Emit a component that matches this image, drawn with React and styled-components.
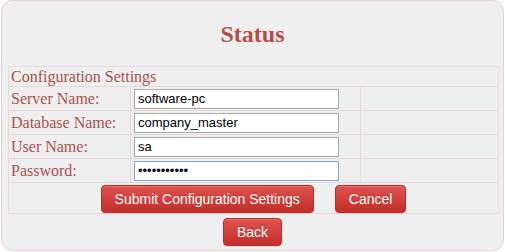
import React from "react"
import styled, { createGlobalStyle } from "styled-components"

const GlobalStyle = createGlobalStyle`
    body {
        margin: 0;
        background: #ffffff;
        font-family: "Liberation Serif", "Times New Roman", serif;
    }
`

const Panel = styled.div`
    box-sizing: border-box;
    width: 503px;
    height: 251px;
    margin: 0 0 0 1px;
    padding: 0 6px;
    background-color: #efefef;
    border: 1px solid #e6d2d4;
    border-radius: 11px;
`

const Title = styled.h2`
    margin: 0;
    height: 65px;
    display: flex;
    align-items: center;
    justify-content: center;
    padding-top: 2px;
    box-sizing: border-box;
    font-family: "Liberation Serif", "Times New Roman", serif;
    font-size: 24px;
    font-weight: bold;
    color: #b34f4a;
`

const Table = styled.table`
    width: 490px;
    border-collapse: collapse;
    table-layout: fixed;
`

const Cell = styled.td`
    border: 1px solid #ead7d9;
    padding: 0 2px;
    height: ${(p) => p.$height || 23}px;
    font-size: 16px;
    color: #a8514d;
    text-align: ${(p) => (p.$center ? "center" : "left")};
    vertical-align: middle;
    white-space: nowrap;
`

const Field = styled.input`
    box-sizing: border-box;
    width: 205px;
    height: 20px;
    margin: 0 0 0 1px;
    padding: 0 3px;
    font-family: "Liberation Sans", Arial, sans-serif;
    font-size: 13px;
    color: #000;
    background: #fff;
    border: 1px solid ${(p) => (p.$focused ? "#82a8d8" : "#a9a9a9")};
    border-radius: 0;
    outline: none;
    display: block;
`

const Buttons = styled.div`
    display: flex;
    justify-content: center;
    gap: 21px;
    padding: 1px 0 0;
`

const Button = styled.button`
    box-sizing: border-box;
    height: 28px;
    padding: 0 13px;
    font-family: "Liberation Sans", Arial, sans-serif;
    font-size: 14px;
    color: #fff;
    text-shadow: 0 -1px 0 rgba(0, 0, 0, 0.2);
    background-image: linear-gradient(to bottom, #e0534f 0%, #c22e2a 100%);
    border: 1px solid #b92c28;
    border-radius: 4px;
    box-shadow: inset 0 1px 0 rgba(255, 255, 255, 0.15), 0 1px 1px rgba(0, 0, 0, 0.075);
    cursor: pointer;
`

const BackRow = styled.div`
    display: flex;
    justify-content: center;
    padding-top: 4px;
`

const rows = [
    { label: "Server Name:", value: "software-pc" },
    { label: "Database Name:", value: "company_master" },
    { label: "User Name:", value: "sa" },
    { label: "Password:", value: "12345678901", type: "password", focused: true },
]

function App() {
    return (
        <>
            <GlobalStyle />
            <Panel>
                <Title>Status</Title>
                <Table>
                    <colgroup>
                        <col style={{ width: 122 }} />
                        <col style={{ width: 230 }} />
                        <col style={{ width: 138 }} />
                    </colgroup>
                    <tbody>
                        <tr>
                            <Cell colSpan={3} $height={19}>Configuration Settings</Cell>
                        </tr>
                        {rows.map((r) => (
                            <tr key={r.label}>
                                <Cell>{r.label}</Cell>
                                <Cell>
                                    <Field
                                        type={r.type || "text"}
                                        defaultValue={r.value}
                                        $focused={r.focused}
                                    />
                                </Cell>
                                <Cell />
                            </tr>
                        ))}
                        <tr>
                            <Cell colSpan={3} $height={30} $center>
                                <Buttons>
                                    <Button>Submit Configuration Settings</Button>
                                    <Button>Cancel</Button>
                                </Buttons>
                            </Cell>
                        </tr>
                    </tbody>
                </Table>
                <BackRow>
                    <Button>Back</Button>
                </BackRow>
            </Panel>
        </>
    )
}

export default App
